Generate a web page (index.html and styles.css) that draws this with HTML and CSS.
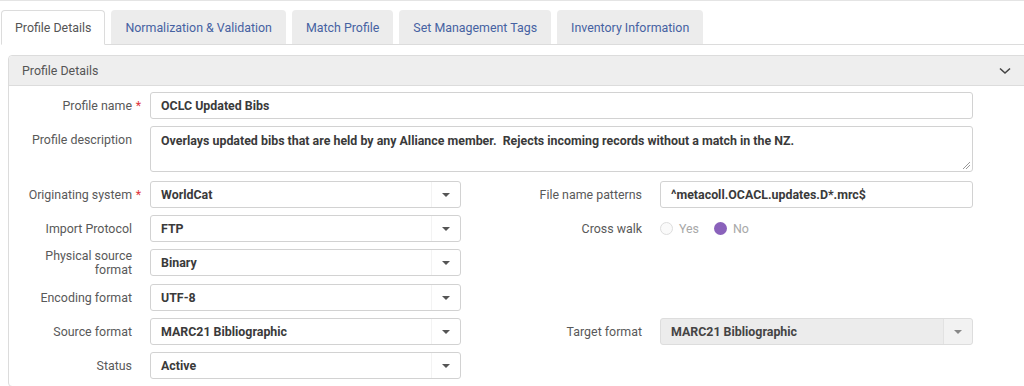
FILE: index.html
```html
<!DOCTYPE html>
<html>
<head>
<meta charset="utf-8">
<link rel="stylesheet" href="styles.css">
</head>
<body>
<div class="page">
  <div class="tabs">
    <div class="tab active">Profile Details</div>
    <div class="tab">Normalization &amp; Validation</div>
    <div class="tab">Match Profile</div>
    <div class="tab">Set Management Tags</div>
    <div class="tab">Inventory Information</div>
    <div class="tab-fill"></div>
  </div>
  <div class="panel">
    <div class="panel-head">
      <span>Profile Details</span>
      <svg class="chev" width="12" height="8" viewBox="0 0 12 8"><path d="M1 1.5 L6 6 L11 1.5" fill="none" stroke="#444" stroke-width="1.6"/></svg>
    </div>
    <div class="form">
      <div class="lbl">Profile name<span class="req">*</span></div>
      <div class="ctl wide"><div class="input">OCLC Updated Bibs</div></div>

      <div class="lbl top">Profile description</div>
      <div class="ctl wide"><div class="input area">Overlays updated bibs that are held by any Alliance member.&nbsp; Rejects incoming records without a match in the NZ.<span class="grip"></span></div></div>

      <div class="lbl gap">Originating system<span class="req">*</span></div>
      <div class="ctl gap"><div class="input select">WorldCat<span class="arrow"></span></div></div>
      <div class="lbl gap">File name patterns</div>
      <div class="ctl gap"><div class="input">^metacoll.OCACL.updates.D*.mrc$</div></div>

      <div class="lbl">Import Protocol</div>
      <div class="ctl"><div class="input select">FTP<span class="arrow"></span></div></div>
      <div class="lbl">Cross walk</div>
      <div class="ctl radios">
        <span class="radio off"></span><span class="rtext">Yes</span>
        <span class="radio on"></span><span class="rtext">No</span>
      </div>

      <div class="lbl">Physical source<br>format</div>
      <div class="ctl"><div class="input select">Binary<span class="arrow"></span></div></div>
      <div class="empty"></div><div class="empty"></div>

      <div class="lbl">Encoding format</div>
      <div class="ctl"><div class="input select">UTF-8<span class="arrow"></span></div></div>
      <div class="empty"></div><div class="empty"></div>

      <div class="lbl">Source format</div>
      <div class="ctl"><div class="input select">MARC21 Bibliographic<span class="arrow"></span></div></div>
      <div class="lbl">Target format</div>
      <div class="ctl"><div class="input select disabled">MARC21 Bibliographic<span class="arrow"></span></div></div>

      <div class="lbl">Status</div>
      <div class="ctl"><div class="input select">Active<span class="arrow"></span></div></div>
      <div class="empty"></div><div class="empty"></div>
    </div>
  </div>
</div>
</body>
</html>
```
FILE: styles.css
```css
html, body {
  margin: 0;
  padding: 0;
  background: #fff;
  overflow: hidden;
}
body {
  font-family: Roboto, "Liberation Sans", Arial, sans-serif;
  font-size: 12.4px;
  color: #555;
  width: 1024px;
  height: 386px;
}
.page {
  border-top: 1px solid #e4e4e4;
  padding-top: 9px;
}
.tabs {
  display: flex;
  height: 35px;
  padding-left: 1px;
}
.tab {
  box-sizing: border-box;
  height: 35px;
  padding: 0 14px;
  margin-right: 6px;
  display: flex;
  align-items: center;
  background: #ececec;
  color: #4662a2;
  border-radius: 4px 4px 0 0;
  border-bottom: 1px solid #dcdcdc;
  white-space: nowrap;
  position: relative;
}
.tab.active {
  background: #fff;
  color: #555;
  border: 1px solid #dcdcdc;
  border-bottom: 1px solid #fff;
  padding: 0 13px;
  margin-right: 6px;
}
.tab:not(.active)::before {
  content: "";
  position: absolute;
  left: -6px;
  width: 6px;
  bottom: -1px;
  border-bottom: 1px solid #dcdcdc;
}
.tab-fill {
  flex: 1;
  margin-left: -6px;
  border-bottom: 1px solid #dcdcdc;
}
.panel {
  margin: 10px -20px 0 8px;
  border: 1px solid #dcdcdc;
  border-radius: 4px;
  height: 330px;
}
.panel-head {
  height: 29px;
  background: #eeeeee;
  border-bottom: 1px solid #dcdcdc;
  border-radius: 4px 4px 0 0;
  display: flex;
  align-items: center;
  padding-left: 13px;
  padding-right: 32px;
  justify-content: space-between;
  color: #555;
}
.chev {
  display: block;
}
.form {
  display: grid;
  grid-template-columns: 141px 311px 199px 313px;
  row-gap: 7px;
  padding-top: 6px;
}
.lbl {
  text-align: right;
  padding-right: 18px;
  display: flex;
  align-items: center;
  justify-content: flex-end;
  line-height: 14px;
  color: #595959;
}
.lbl.top {
  align-items: flex-start;
  padding-top: 7px;
}
.req {
  color: #e0363b;
  margin-left: 3px;
  margin-right: -9px;
  width: 6px;
}
.gap {
  margin-top: 2px;
}
.ctl.wide {
  grid-column: 2 / 5;
}
.input {
  box-sizing: border-box;
  height: 27px;
  border: 1px solid #d2d2d2;
  border-radius: 3px;
  padding: 0 10px;
  display: flex;
  align-items: center;
  font-weight: bold;
  color: #3a3a3a;
  position: relative;
  background: #fff;
  white-space: nowrap;
}
.input.area {
  height: 46px;
  align-items: flex-start;
  padding-top: 6px;
  line-height: 16px;
}
.grip {
  position: absolute;
  right: 2px;
  bottom: 2px;
  width: 7px;
  height: 7px;
  background: linear-gradient(135deg, transparent 45%, #999 45%, #999 52%, transparent 52%, transparent 70%, #999 70%, #999 77%, transparent 77%);
}
.select .arrow {
  position: absolute;
  right: 0;
  top: 0;
  bottom: 0;
  width: 28px;
  border-left: 1px solid #f3f3f3;
}
.select .arrow::after {
  content: "";
  position: absolute;
  left: 10px;
  top: 11px;
  border-left: 4px solid transparent;
  border-right: 4px solid transparent;
  border-top: 4px solid #555;
}
.select.disabled {
  background: #ececec;
  color: #444;
  border-color: #dddddd;
}
.select.disabled .arrow {
  background: #f2f2f2;
  border-left: 1px solid #e2e2e2;
  border-radius: 0 3px 3px 0;
}
.select.disabled .arrow::after {
  border-top-color: #888;
}
.radios {
  display: flex;
  align-items: center;
  height: 27px;
}
.radio {
  box-sizing: border-box;
  width: 13px;
  height: 13px;
  border-radius: 50%;
  margin-right: 6px;
}
.radio.off {
  border: 1px solid #ddd;
  background: #fafafa;
}
.radio.on {
  background: #8a62bb;
  margin-left: 15px;
}
.rtext {
  color: #a8a8a8;
}
```
